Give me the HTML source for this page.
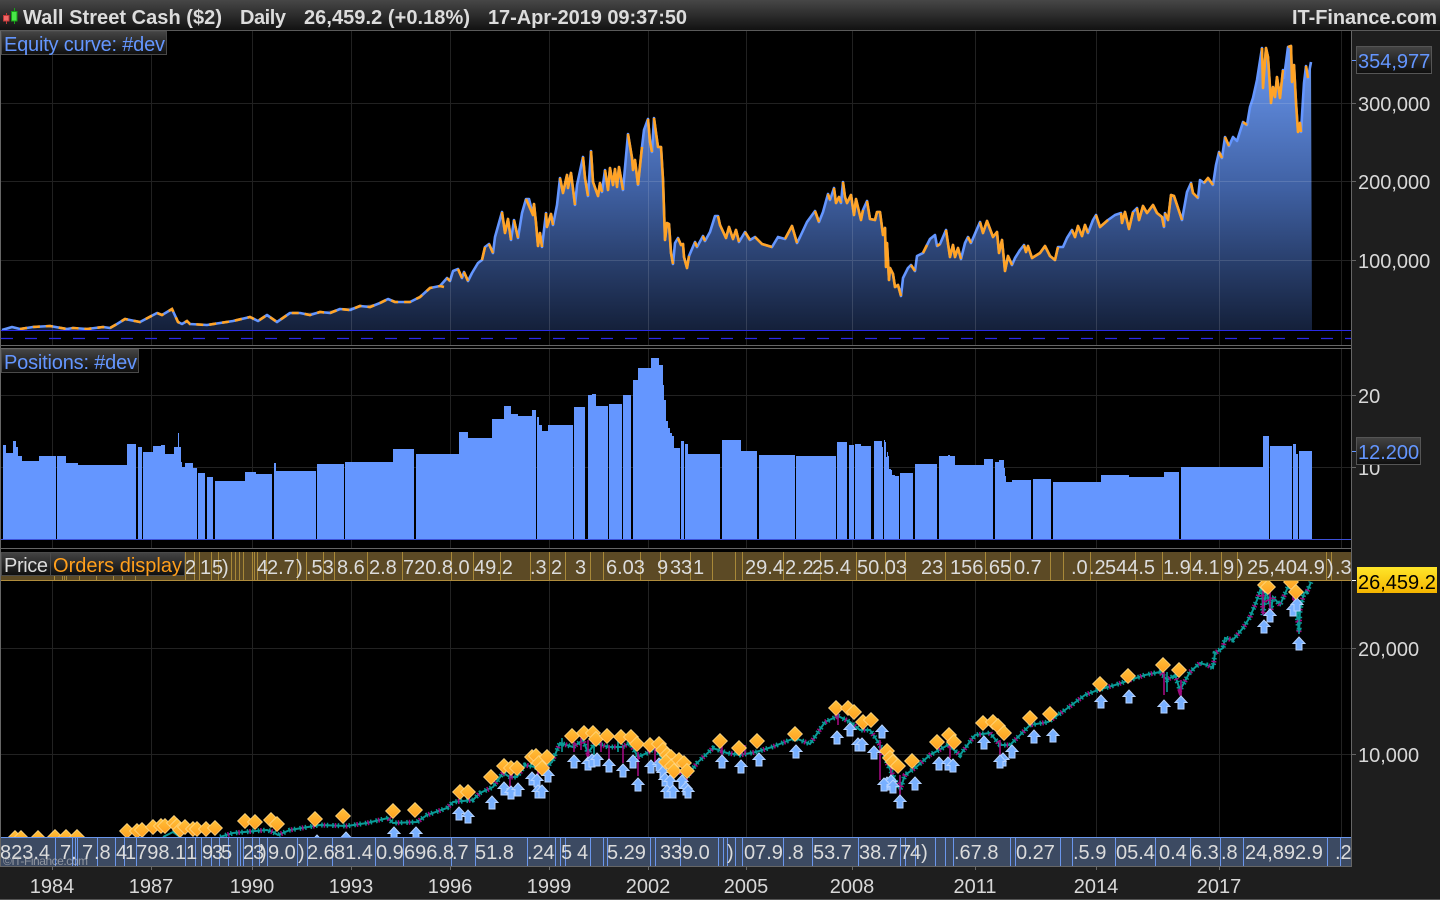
<!DOCTYPE html>
<html><head><meta charset="utf-8"><title>Wall Street Cash</title>
<style>html,body{margin:0;padding:0;background:#000;width:1440px;height:900px;overflow:hidden}svg{display:block}
text{font-family:"Liberation Sans",sans-serif;font-size:20px;fill:#dcdcdc}
.b{font-weight:bold}.bl{fill:#6496ff}.ax{fill:#d8d8d8}.m{text-anchor:middle}</style></head><body>
<svg width="1440" height="900" viewBox="0 0 1440 900" xmlns="http://www.w3.org/2000/svg">
<defs>
<linearGradient id="top" x1="0" y1="0" x2="0" y2="1"><stop offset="0" stop-color="#474747"/><stop offset="1" stop-color="#121212"/></linearGradient>
<linearGradient id="lab" x1="0" y1="0" x2="0" y2="1"><stop offset="0" stop-color="#444"/><stop offset="1" stop-color="#0e0e0e"/></linearGradient>
<linearGradient id="yel" x1="0" y1="0" x2="0" y2="1"><stop offset="0" stop-color="#ffe62a"/><stop offset="1" stop-color="#f4b400"/></linearGradient>
<linearGradient id="area" gradientUnits="userSpaceOnUse" x1="0" y1="50" x2="0" y2="330"><stop offset="0" stop-color="#6a98f0"/><stop offset=".5" stop-color="#3f60a2"/><stop offset="1" stop-color="#14203a"/></linearGradient>
<linearGradient id="dg" x1="0" y1="0" x2="0" y2="1"><stop offset="0" stop-color="#ffc03a"/><stop offset="1" stop-color="#ffa020"/></linearGradient>
<polygon id="d" points="0,-7.5 7.5,0 0,7.5 -7.5,0" fill="url(#dg)" stroke="#ffdc90" stroke-width=".7"/>
<path id="a" d="M0 0L6 6.5H3V13H-3V6.5H-6Z" fill="#78b0ff" stroke="#b4d2ff" stroke-width="1"/>
<clipPath id="p3"><rect x="1" y="581" width="1350" height="256"/></clipPath>
<path id="eq" d="M2 330L12 327 20 329 33 327 50 326 67 329 73 328 87 329 103 327 110 328 117 324 125 319 140 322 157 313 162 315 172 309 178 322 182 324 187 321 190 324 207 325 220 323 233 321 250 317 258 321 267 315 277 322 290 313 300 313 310 315 320 312 330 313 340 309 350 310 360 306 370 307 380 303 388 299 395 302 410 302 420 297 430 288 440 286 447 278 450 281 453 271 458 269 462 278 464 272 468 281 472 273 478 263 482 260 485 247 489 244 493 253 495 237 502 212 505 233 508 219 511 240 514 220 518 238 522 213 526 199 529 199 533 215 534 204 536 223 538 246 540 233 542 247 546 213 547 227 551 214 553 225 557 205 560 178 563 193 567 175 568 188 571 173 573 189 575 205 577 185 583 157 585 178 588 196 591 151 593 182 598 196 600 183 602 192 605 170 608 190 610 168 613 185 615 169 617 187 619 167 623 190 628 134 632 158 633 170 635 160 638 185 642 147 644 130 648 119 650 142 652 152 654 118 656 133 658 147 661 147 663 180 665 240 667 223 669 224 671 253 673 264 675 243 678 238 681 245 683 244 684 257 687 268 689 256 695 242 697 247 703 236 705 241 710 232 715 216 718 216 720 225 726 238 729 227 733 239 736 230 739 242 745 232 750 240 755 237 762 244 772 247 778 237 785 239 792 226 797 243 800 237 807 222 815 211 819 222 823 212 828 194 830 200 834 188 836 203 839 197 841 203 843 182 845 197 847 203 851 195 854 215 856 199 861 220 863 210 867 201 870 219 875 220 877 212 880 212 883 235 885 228 886 267 887 243 889 280 890 268 893 274 895 287 898 285 901 296 903 278 908 268 911 265 915 271 917 256 923 253 927 245 930 239 935 235 937 246 940 244 946 230 950 257 953 245 955 257 958 248 961 259 965 243 968 237 971 243 980 222 983 233 987 221 993 237 997 232 999 253 1002 240 1005 271 1008 256 1012 265 1015 258 1020 250 1024 245 1026 252 1028 246 1032 258 1040 253 1045 246 1050 256 1055 260 1058 247 1063 247 1067 238 1072 230 1075 237 1078 226 1082 236 1085 225 1088 233 1093 220 1096 215 1100 227 1108 220 1115 215 1121 213 1122 223 1125 212 1129 229 1133 212 1137 208 1139 220 1143 206 1147 213 1153 205 1157 213 1162 217 1164 227 1165 213 1168 220 1171 195 1174 196 1177 205 1182 220 1187 192 1191 183 1193 193 1198 198 1200 180 1204 183 1208 178 1213 185 1216 165 1219 152 1222 158 1225 137 1229 146 1233 137 1237 141 1243 122 1247 125 1250 107 1253 98 1257 80 1262 48 1263 88 1266 48 1268 57 1271 103 1273 87 1275 97 1277 77 1280 98 1283 70 1284 78 1288 47 1291 46 1292 82 1294 65 1296 103 1298 132 1300 123 1301 132 1304 83 1306 66 1308 78 1311 62"/>
<path id="pr" d="M220 837L233 833 267 830 273 832 278 835 290 830 320 825 347 826 367 823 388 818 393 823 417 822 427 815 447 808 453 802 473 800 480 793 493 787 503 773 510 777 517 777 525 765 535 767 542 770 552 762 560 743 573 747 583 740 588 753 595 743 608 747 622 747 630 743 638 757 647 753 655 748 663 760 673 767 687 777 697 763 713 748 727 753 740 755 756 752 772 747 795 738 810 744 825 722 838 716 850 722 860 730 870 730 880 745 888 765 900 790 905 775 915 768 930 755 948 745 960 755 975 735 990 733 1000 745 1010 745 1030 725 1048 722 1065 710 1085 695 1098 690 1115 685 1130 680 1145 675 1160 672 1167 680 1175 675 1180 690 1190 672 1200 663 1207 665 1213 668 1215 653 1223 648 1225 638 1233 640 1243 628 1250 617 1257 600 1262 585 1263 615 1266 590 1271 610 1273 597 1280 605 1288 587 1293 583 1295 598 1299 632 1300 610 1304 593 1307 592 1311 582"/>
</defs>

<rect width="1440" height="900" fill="#000"/>
<rect x="1352" y="31" width="88" height="869" fill="#1e1e1e"/>
<rect y="866" width="1440" height="34" fill="#1e1e1e"/>

<!-- panel 1 area -->
<path fill="url(#area)" d="M2 330L12 327 20 329 33 327 50 326 67 329 73 328 87 329 103 327 110 328 117 324 125 319 140 322 157 313 162 315 172 309 178 322 182 324 187 321 190 324 207 325 220 323 233 321 250 317 258 321 267 315 277 322 290 313 300 313 320 312 340 309 360 306 380 303 388 299 395 302 410 302 420 297 430 288 440 286 447 278 450 281 453 271 458 269 462 278 464 272 468 281 472 273 478 263 482 260 485 247 489 244 493 253 495 237 502 212 505 233 508 219 511 240 514 220 518 238 522 213 526 199 529 199 533 215 534 204 536 223 538 246 540 233 542 247 546 213 547 227 551 214 553 225 557 205 560 178 563 193 567 175 568 188 571 173 573 189 575 205 577 185 583 157 585 178 588 196 591 151 593 182 598 196 600 183 602 192 605 170 608 190 610 168 613 185 615 169 617 187 619 167 623 190 628 134 632 158 633 170 635 160 638 185 642 147 644 130 648 119 650 142 652 152 654 118 656 133 658 147 661 147 663 180 665 240 667 223 669 224 671 253 673 264 675 243 678 238 681 245 683 244 684 257 687 268 689 256 695 242 697 247 703 236 705 241 710 232 715 216 718 216 720 225 726 238 729 227 733 239 736 230 739 242 745 232 750 240 755 237 762 244 772 247 778 237 785 239 792 226 797 243 800 237 807 222 815 211 819 222 823 212 828 194 830 200 834 188 836 203 839 197 841 203 843 182 845 197 847 203 851 195 854 215 856 199 861 220 863 210 867 201 870 219 875 220 877 212 880 212 883 235 885 228 886 267 887 243 889 280 890 268 893 274 895 287 898 285 901 296 903 278 908 268 911 265 915 271 917 256 923 253 927 245 930 239 935 235 937 246 940 244 946 230 950 257 953 245 955 257 958 248 961 259 965 243 968 237 971 243 980 222 983 233 987 221 993 237 997 232 999 253 1002 240 1005 271 1008 256 1012 265 1015 258 1020 250 1024 245 1026 252 1028 246 1032 258 1040 253 1045 246 1050 256 1055 260 1058 247 1063 247 1067 238 1072 230 1075 237 1078 226 1082 236 1085 225 1088 233 1093 220 1096 215 1100 227 1108 220 1115 215 1121 213 1122 223 1125 212 1129 229 1133 212 1137 208 1139 220 1143 206 1147 213 1153 205 1157 213 1162 217 1164 227 1165 213 1168 220 1171 195 1174 196 1177 205 1182 220 1187 192 1191 183 1193 193 1198 198 1200 180 1204 183 1208 178 1213 185 1216 165 1219 152 1222 158 1225 137 1229 146 1233 137 1237 141 1243 122 1247 125 1250 107 1253 98 1257 80 1262 48 1263 88 1266 48 1268 57 1271 103 1273 87 1275 97 1277 77 1280 98 1283 70 1284 78 1288 47 1291 46 1292 82 1294 65 1296 103 1298 132 1300 123 1301 132 1304 83 1306 66 1308 78 1311 62 1312 330Z"/>
<use href="#eq" fill="none" stroke="#6496ff" stroke-width="2.6" stroke-linejoin="round"/>
<!-- orange falling segments -->
<path fill="none" stroke="#ffa326" stroke-width="2.6" stroke-dasharray="7 6" d="M20 329L33 327 50 326 67 329 73 328 87 329 103 327 110 328 117 324 125 319 140 322 157 313 162 315 172 309 178 322 182 324 187 321 190 324 207 325 220 323 233 321 250 317 258 321 267 315 277 322 290 313 300 313 310 315 320 312 330 313 340 309 350 310 360 306 370 307 380 303 388 299 395 302 410 302 420 297 430 288 440 286"/>
<path fill="none" stroke="#ffa326" stroke-width="2.6" stroke-linejoin="round" d="M440 286L444 287M447 278L450 281M458 269L462 278M464 272L468 281M485 247L482 260M489 244L493 253M502 212L505 233 508 219 511 240M514 220L518 238M526 199L533 215 534 204 536 223 538 246 540 233 542 247M546 213L547 227 551 214 553 225M560 178L563 193 567 175 568 188 571 173 573 189 575 205M583 157L585 178 588 196M591 151L593 182 598 196 600 183 602 192M605 170L608 190 610 168 613 185 615 169 617 187 619 167 623 190M628 134L632 158 633 170 635 160 638 185M642 147L638 185M648 119L650 142 652 152M654 118L656 133 658 147 661 147 663 180 665 240 667 223 669 224 671 253 673 264M678 238L681 245 683 244 684 257 687 268 689 256M695 242L697 247M703 236L705 241M718 216L720 225 726 238 729 227 733 239 736 230 739 242M745 232L750 240M755 237L762 244 772 247M785 239L792 226 797 243M815 211L819 222M828 194L830 200M834 188L836 203 839 197 841 203M843 182L845 197 847 203 851 195 854 215 856 199 861 220 863 210M867 201L870 219 875 220 877 212 880 212 883 235 885 228 886 267 887 243 889 280 890 268 893 274 895 287 898 285 901 296M911 265L915 271M923 253L927 245M937 246L940 244M946 230L950 257 953 245 955 257 958 248 961 259M968 237L971 243M980 222L983 233 987 221 993 237 997 232 999 253 1002 240 1005 271 1008 256 1012 265M1024 245L1026 252 1028 246 1032 258 1040 253 1045 246 1050 256 1055 260 1058 247M1072 230L1075 237 1078 226 1082 236 1085 225 1088 233M1096 215L1100 227 1108 220M1121 213L1122 223 1125 212 1129 229 1133 212M1137 208L1139 220 1143 206 1147 213 1153 205 1157 213 1162 217 1164 227M1165 213L1168 220 1171 195 1174 196 1177 205 1182 220M1191 183L1193 193 1198 198M1204 183L1208 178 1213 185M1219 152L1222 158M1229 146L1225 137M1243 122L1247 125M1262 48L1263 88 1266 48 1268 57 1271 103 1273 87 1275 97 1277 77 1280 98 1283 70M1288 47L1291 46 1292 82 1294 65 1296 103 1298 132 1300 123 1301 132M1306 66L1308 78"/>
<!-- panel 1 grid -->
<path stroke="#fff" stroke-opacity=".13" fill="none" d="M52.5 31V345M151.5 31V345M252.5 31V345M351.5 31V345M450.5 31V345M549.5 31V345M648.5 31V345M746.5 31V345M852.5 31V345M975.5 31V345M1096.5 31V345M1219.5 31V345M1341.5 31V345M1 103.5H1351M1 181.5H1351M1 260.5H1351"/>
<path stroke="#2a2ae6" d="M1 330.5H1351"/>
<path stroke="#2a2ae6" stroke-width="1.2" stroke-dasharray="12 12" d="M1 338.5H1351"/>

<!-- panel 2 -->
<path stroke="#222" fill="none" d="M52.5 349V548M151.5 349V548M252.5 349V548M351.5 349V548M450.5 349V548M549.5 349V548M648.5 349V548M746.5 349V548M852.5 349V548M975.5 349V548M1096.5 349V548M1219.5 349V548M1341.5 349V548M1 395.5H1351M1 467.5H1351"/>
<path fill="#6496ff" d="M3 539V445H6V453H13V441H16V447H18V456H22V461H39V456H56V539ZM57 539V456H66V463H78V465H127V444H136V539ZM138 539V447H142V539ZM143 539V452H153V446H161V445H165V454H174V447H178V433H179V447H181V462H182V467H185V463H193V468H197V539ZM198 539V473H205V539ZM207 539V477H213V539ZM215 539V481H245V472H256V474H272V539ZM274 539V463H276V471H316V539ZM317 539V464H344V539ZM345 539V462H393V449H414V539ZM416 539V454H459V432H468V438H492V419H504V406H511V414H518V416H532V410H536V539ZM537 539V417H539V425H542V431H548V425H573V539ZM574 539V407H585V539ZM588 539V395H592V394H596V406H608V539ZM609 539V404H622V539ZM623 539V395H631V539ZM633 539V380H638V368H651V358H659V365H663V385H664V400H666V421H668V428H670V433H672V436H674V448H680V539ZM681 539V441H684V539ZM685 539V444H688V454H720V539ZM722 539V440H741V451H757V539ZM759 539V455H795V539ZM796 539V456H836V539ZM837 539V442H847V539ZM849 539V445H854V539ZM855 539V444H861V446H871V539ZM874 539V441H882V447H883V539ZM884 539V440H885V442H886V457H887V452H888V456H889V469H891V470H892V475H895V476H899V539ZM900 539V473H913V539ZM915 539V464H937V539ZM939 539V456H948V455H950V456H955V465H984V459H993V539ZM995 539V462H999V460H1004V468H1005V476H1006V482H1012V480H1031V539ZM1033 539V479H1051V539ZM1053 539V482H1101V475H1129V477H1164V472H1179V539ZM1181 539V467H1263V436H1269V539ZM1270 539V446H1292V539ZM1293 539V444H1296V454H1298V539ZM1299 539V451H1312V539Z"/>
<path stroke="#3c50d8" d="M1 539.5H1351"/>

<!-- panel 3 -->
<path stroke="#222" fill="none" d="M52.5 581V837M151.5 581V837M252.5 581V837M351.5 581V837M450.5 581V837M549.5 581V837M648.5 581V837M746.5 581V837M852.5 581V837M975.5 581V837M1096.5 581V837M1219.5 581V837M1341.5 581V837M1 648.5H1351M1 754.5H1351"/>
<g clip-path="url(#p3)">
<path fill="none" stroke="#0a9a96" stroke-width="2" d="M163 837L173 832 180 837"/>
<use href="#pr" fill="none" stroke="#0a9a96" stroke-width="2"/>
<use href="#pr" fill="none" stroke="#0a9a96" stroke-width="5" stroke-dasharray="1.5 4"/>
<use href="#pr" fill="none" stroke="#a00a80" stroke-width="5" stroke-dasharray="1.5 9.5" stroke-dashoffset="3"/>
<path fill="none" stroke="#a00a80" stroke-width="1.6" d="M510 775V787M538 765V782M574 742V752M581 738V750M588 740V758M601 742V752M609 745V759M623 745V763M638 752V776M655 745V762M663 755V772M676 760V772M687 770V782M722 745V755M745 745V755M838 710V725M880 740V780M891 760V790M900 775V795M950 740V758M1000 740V755M1164 672V695M1181 680V696M1263 590V615M1270 590V612M1293 585V600"/>
<path fill="none" stroke="#0a9a96" stroke-width="1.6" d="M1299 600V634M594 742V756M1167 672V692M562 738V752M618 740V752"/>
<g>
<use href="#a" x="317" y="835"/><use href="#a" x="346" y="832"/><use href="#a" x="394" y="827"/><use href="#a" x="416" y="827"/><use href="#a" x="459" y="807"/><use href="#a" x="468" y="810"/><use href="#a" x="492" y="796"/><use href="#a" x="504" y="782"/><use href="#a" x="511" y="786"/><use href="#a" x="518" y="783"/><use href="#a" x="532" y="772"/><use href="#a" x="537" y="774"/><use href="#a" x="548" y="769"/><use href="#a" x="538" y="785"/><use href="#a" x="542" y="785"/><use href="#a" x="574" y="755"/><use href="#a" x="588" y="757"/><use href="#a" x="592" y="754"/><use href="#a" x="597" y="753"/><use href="#a" x="609" y="759"/><use href="#a" x="623" y="764"/><use href="#a" x="633" y="755"/><use href="#a" x="638" y="778"/><use href="#a" x="651" y="760"/><use href="#a" x="659" y="758"/><use href="#a" x="663" y="766"/><use href="#a" x="665" y="773"/><use href="#a" x="670" y="775"/><use href="#a" x="667" y="785"/><use href="#a" x="673" y="785"/><use href="#a" x="682" y="775"/><use href="#a" x="686" y="782"/><use href="#a" x="688" y="785"/><use href="#a" x="722" y="755"/><use href="#a" x="741" y="760"/><use href="#a" x="759" y="753"/><use href="#a" x="796" y="745"/><use href="#a" x="837" y="731"/><use href="#a" x="850" y="723"/><use href="#a" x="858" y="738"/><use href="#a" x="862" y="738"/><use href="#a" x="874" y="746"/><use href="#a" x="882" y="725"/><use href="#a" x="887" y="777"/><use href="#a" x="891" y="775"/><use href="#a" x="884" y="778"/><use href="#a" x="893" y="780"/><use href="#a" x="900" y="795"/><use href="#a" x="915" y="777"/><use href="#a" x="939" y="757"/><use href="#a" x="948" y="757"/><use href="#a" x="953" y="759"/><use href="#a" x="984" y="736"/><use href="#a" x="1003" y="753"/><use href="#a" x="1000" y="755"/><use href="#a" x="1012" y="745"/><use href="#a" x="1034" y="730"/><use href="#a" x="1053" y="729"/><use href="#a" x="1101" y="695"/><use href="#a" x="1129" y="690"/><use href="#a" x="1164" y="700"/><use href="#a" x="1181" y="696"/><use href="#a" x="1264" y="620"/><use href="#a" x="1270" y="609"/><use href="#a" x="1293" y="603"/><use href="#a" x="1297" y="598"/><use href="#a" x="1299" y="637"/>
</g>
<g>
<use href="#d" x="15" y="838"/><use href="#d" x="21" y="838"/><use href="#d" x="38" y="838"/><use href="#d" x="55" y="837"/><use href="#d" x="66" y="837"/><use href="#d" x="77" y="837"/><use href="#d" x="127" y="831"/><use href="#d" x="137" y="831"/><use href="#d" x="142" y="830"/><use href="#d" x="153" y="827"/><use href="#d" x="161" y="826"/><use href="#d" x="165" y="826"/><use href="#d" x="174" y="823"/><use href="#d" x="177" y="826"/><use href="#d" x="180" y="830"/><use href="#d" x="185" y="827"/><use href="#d" x="193" y="829"/><use href="#d" x="197" y="829"/><use href="#d" x="206" y="829"/><use href="#d" x="215" y="828"/><use href="#d" x="245" y="821"/><use href="#d" x="255" y="822"/><use href="#d" x="271" y="820"/><use href="#d" x="277" y="824"/><use href="#d" x="315" y="819"/><use href="#d" x="343" y="816"/><use href="#d" x="393" y="811"/><use href="#d" x="415" y="810"/><use href="#d" x="460" y="792"/><use href="#d" x="468" y="792"/><use href="#d" x="491" y="777"/><use href="#d" x="504" y="766"/><use href="#d" x="511" y="768"/><use href="#d" x="517" y="768"/><use href="#d" x="532" y="757"/><use href="#d" x="536" y="756"/><use href="#d" x="539" y="763"/><use href="#d" x="542" y="768"/><use href="#d" x="547" y="757"/><use href="#d" x="572" y="736"/><use href="#d" x="584" y="733"/><use href="#d" x="593" y="733"/><use href="#d" x="596" y="739"/><use href="#d" x="607" y="736"/><use href="#d" x="621" y="737"/><use href="#d" x="631" y="737"/><use href="#d" x="637" y="744"/><use href="#d" x="650" y="745"/><use href="#d" x="659" y="744"/><use href="#d" x="663" y="750"/><use href="#d" x="667" y="755"/><use href="#d" x="671" y="757"/><use href="#d" x="666" y="762"/><use href="#d" x="672" y="766"/><use href="#d" x="674" y="771"/><use href="#d" x="679" y="760"/><use href="#d" x="684" y="763"/><use href="#d" x="687" y="771"/><use href="#d" x="720" y="741"/><use href="#d" x="739" y="748"/><use href="#d" x="757" y="741"/><use href="#d" x="795" y="734"/><use href="#d" x="836" y="708"/><use href="#d" x="848" y="708"/><use href="#d" x="854" y="712"/><use href="#d" x="863" y="722"/><use href="#d" x="871" y="720"/><use href="#d" x="887" y="751"/><use href="#d" x="890" y="758"/><use href="#d" x="893" y="762"/><use href="#d" x="898" y="766"/><use href="#d" x="912" y="761"/><use href="#d" x="937" y="742"/><use href="#d" x="949" y="735"/><use href="#d" x="954" y="742"/><use href="#d" x="983" y="723"/><use href="#d" x="993" y="722"/><use href="#d" x="998" y="726"/><use href="#d" x="1004" y="733"/><use href="#d" x="1030" y="718"/><use href="#d" x="1050" y="714"/><use href="#d" x="1100" y="684"/><use href="#d" x="1128" y="676"/><use href="#d" x="1163" y="665"/><use href="#d" x="1179" y="670"/><use href="#d" x="1265" y="585"/><use href="#d" x="1268" y="587"/><use href="#d" x="1291" y="582"/><use href="#d" x="1296" y="592"/>
</g>
</g>

<!-- gold strip -->
<rect x="1" y="552" width="1350" height="28" fill="#5c4a25"/>
<path stroke="#b08c3c" d="M1 580.5H1351"/>
<path stroke="#a88838" fill="none" d="M54.5 575V580M62.5 575V580M64.5 575V580M66.5 575V580M79.5 575V580M96.5 575V580M113.5 575V580M122.5 575V580M135.5 575V580M185.5 552V580M194.5 552V580M199.5 552V580M211.5 552V580M218.5 552V580M231.5 552V580M235.5 552V580M239.5 552V580M243.5 552V580M252.5 552V580M254.5 552V580M257.5 552V580M266.5 552V580M297.5 552V580M306.5 552V580M323.5 552V580M334.5 552V580M367.5 552V580M402.5 552V580M451.5 552V580M473.5 552V580M500.5 552V580M530.5 552V580M549.5 552V580M565.5 552V580M590.5 552V580M603.5 552V580M640.5 552V580M660.5 552V580M690.5 552V580M712.5 552V580M735.5 552V580M742.5 552V580M783.5 552V580M820.5 552V580M856.5 552V580M885.5 552V580M905.5 552V580M945.5 552V580M985.5 552V580M1010.5 552V580M1050.5 552V580M1063.5 552V580M1090.5 552V580M1135.5 552V580M1162.5 552V580M1190.5 552V580M1221.5 552V580M1237.5 552V580M1326.5 552V580M1331.5 552V580"/>
<g>
<text x="185" y="574">2</text><text x="200" y="574">1</text><text x="212" y="574">5</text><text x="222" y="574">)</text><text x="257" y="574">4</text><text x="267" y="574">2.7</text><text x="296" y="574">)</text><text x="306" y="574">.53</text><text x="337" y="574">8.6</text><text x="369" y="574">2.8</text><text x="403" y="574">720.8</text><text x="453" y="574">.0</text><text x="474" y="574">49.2</text><text x="530" y="574">.3</text><text x="551" y="574">2</text><text x="575" y="574">3</text><text x="606" y="574">6.03</text><text x="657" y="574">9</text><text x="670" y="574">3</text><text x="681" y="574">3</text><text x="693" y="574">1</text><text x="745" y="574">29.4</text><text x="785" y="574">2</text><text x="797" y="574">.2</text><text x="812" y="574">25.4</text><text x="857" y="574">50.03</text><text x="921" y="574">23</text><text x="950" y="574">156.65</text><text x="1014" y="574">0.7</text><text x="1071" y="574">.0</text><text x="1089" y="574">.2</text><text x="1105" y="574">544.5</text><text x="1163" y="574">1.9</text><text x="1192" y="574">4.1</text><text x="1223" y="574">9</text><text x="1237" y="574">)</text><text x="1247" y="574">25,404.9</text><text x="1327" y="574">)</text><text x="1335" y="574">.3</text>
</g>
<rect x="1.5" y="552.5" width="49" height="23" fill="url(#lab)" stroke="#4a4a4a"/>
<rect x="50.5" y="552.5" width="134" height="23" fill="url(#lab)" stroke="#4a4a4a"/>
<text x="4" y="572" textLength="44">Price</text>
<text x="53" y="572" textLength="129" style="fill:#ff9f1c">Orders display</text>

<!-- bottom strip -->
<rect x="1" y="837" width="1350" height="29" fill="#3c4a62"/>
<path stroke="#6a96ec" d="M1 837.5H1351"/>
<path stroke="#6a96ec" fill="none" d="M55.5 838V866M72.5 838V866M75.5 838V866M77.5 838V866M97.5 838V866M115.5 838V866M124.5 838V866M136.5 838V866M185.5 838V866M195.5 838V866M201.5 838V866M211.5 838V866M219.5 838V866M228.5 838V866M237.5 838V866M240.5 838V866M243.5 838V866M252.5 838V866M259.5 838V866M267.5 838V866M297.5 838V866M307.5 838V866M332.5 838V866M375.5 838V866M403.5 838V866M451.5 838V866M475.5 838V866M527.5 838V866M555.5 838V866M560.5 838V866M565.5 838V866M590.5 838V866M603.5 838V866M607.5 838V866M650.5 838V866M655.5 838V866M680.5 838V866M718.5 838V866M723.5 838V866M727.5 838V866M735.5 838V866M742.5 838V866M783.5 838V866M812.5 838V866M858.5 838V866M900.5 838V866M905.5 838V866M915.5 838V866M935.5 838V866M945.5 838V866M953.5 838V866M1010.5 838V866M1015.5 838V866M1060.5 838V866M1072.5 838V866M1115.5 838V866M1155.5 838V866M1190.5 838V866M1220.5 838V866M1243.5 838V866M1327.5 838V866M1340.5 838V866"/>
<g>
<text x="0" y="859">823.4</text><text x="60" y="859">7.</text><text x="82" y="859">7</text><text x="94" y="859">.8</text><text x="116" y="859">4</text><text x="125" y="859">1798.1</text><text x="186" y="859">1</text><text x="202" y="859">9</text><text x="212" y="859">3</text><text x="221" y="859">5</text><text x="243" y="859">2</text><text x="253" y="859">3</text><text x="260" y="859">)</text><text x="268" y="859">9.0</text><text x="298" y="859">)</text><text x="307" y="859">2.6</text><text x="334" y="859">81.4</text><text x="376" y="859">0.9</text><text x="404" y="859">696.8</text><text x="452" y="859">.7</text><text x="475" y="859">51.8</text><text x="527" y="859">.24</text><text x="561" y="859">5</text><text x="577" y="859">4</text><text x="607" y="859">5.29</text><text x="660" y="859">3</text><text x="671" y="859">3</text><text x="682" y="859">9.0</text><text x="727" y="859">)</text><text x="744" y="859">07.9</text><text x="787" y="859">.8</text><text x="813" y="859">53.7</text><text x="859" y="859">38.7</text><text x="900" y="859">7</text><text x="910" y="859">4)</text><text x="954" y="859">.67.8</text><text x="1016" y="859">0.27</text><text x="1073" y="859">.5.9</text><text x="1116" y="859">05.4</text><text x="1159" y="859">0.4</text><text x="1191" y="859">6.3</text><text x="1221" y="859">.8</text><text x="1245" y="859">24,892.9</text><text x="1335" y="859">.2</text>
</g>
<text x="3" y="865" textLength="85" style="font-size:12px;fill:#c8c8c8;fill-opacity:.6">©IT-Finance.com</text>

<!-- x axis -->
<path stroke="#666" d="M0 866.5H1352"/>
<path stroke="#666" fill="none" d="M52.5 866V870M151.5 866V870M252.5 866V870M351.5 866V870M450.5 866V870M549.5 866V870M648.5 866V870M746.5 866V870M852.5 866V870M975.5 866V870M1096.5 866V870M1219.5 866V870"/>
<g><text class="m ax" x="52" y="893">1984</text><text class="m ax" x="151" y="893">1987</text><text class="m ax" x="252" y="893">1990</text><text class="m ax" x="351" y="893">1993</text><text class="m ax" x="450" y="893">1996</text><text class="m ax" x="549" y="893">1999</text><text class="m ax" x="648" y="893">2002</text><text class="m ax" x="746" y="893">2005</text><text class="m ax" x="852" y="893">2008</text><text class="m ax" x="975" y="893">2011</text><text class="m ax" x="1096" y="893">2014</text><text class="m ax" x="1219" y="893">2017</text></g>

<!-- frames -->
<path stroke="#666" fill="none" d="M.5 31V866M1351.5 31V866M0 345.5H1352M0 348.5H1352M0 548.5H1352"/>
<path stroke="#555" d="M0 899.5H1440"/>

<!-- top bar -->
<rect width="1440" height="30" fill="url(#top)"/>
<path stroke="#5a5a5a" d="M0 30.5H1440"/>
<path stroke="#c03838" d="M6.5 13V24"/><rect x="3.5" y="15.5" width="5.5" height="5.5" fill="#f06868" stroke="#c03838"/>
<path stroke="#18a018" d="M14.5 8V24"/><rect x="11.5" y="11.5" width="5.5" height="9.5" fill="#48e848" stroke="#18a018"/>
<text class="b" x="23" y="24" textLength="199">Wall Street Cash ($2)</text>
<text class="b" x="240" y="24" textLength="46">Daily</text>
<text class="b" x="304" y="24" textLength="166">26,459.2 (+0.18%)</text>
<text class="b" x="488" y="24" textLength="199">17-Apr-2019 09:37:50</text>
<text class="b" x="1292" y="24" textLength="145">IT-Finance.com</text>

<!-- panel labels -->
<rect x="1.5" y="31.5" width="165" height="23" fill="url(#lab)" stroke="#4a4a4a"/>
<text class="bl" x="4" y="51" textLength="161">Equity curve: #dev</text>
<rect x="1.5" y="349.5" width="137" height="23" fill="url(#lab)" stroke="#4a4a4a"/>
<text class="bl" x="4" y="369" textLength="133">Positions: #dev</text>

<!-- right axis -->
<path stroke="#666" fill="none" d="M1352 103.5H1356M1352 181.5H1356M1352 260.5H1356M1352 395.5H1356M1352 467.5H1356M1352 648.5H1356M1352 754.5H1356"/>
<text class="ax" x="1358" y="111">300,000</text>
<text class="ax" x="1358" y="189">200,000</text>
<text class="ax" x="1358" y="268">100,000</text>
<text class="ax" x="1358" y="403">20</text>
<text class="ax" x="1358" y="475">10</text>
<text class="ax" x="1358" y="656">20,000</text>
<text class="ax" x="1358" y="762">10,000</text>
<path stroke="#6496ff" d="M1352 60.5H1356M1352 451.5H1356"/>
<path stroke="#fff" d="M1352 580.5H1356"/>
<rect x="1356.5" y="46.5" width="75" height="27" fill="url(#lab)" stroke="#555"/>
<text class="bl" x="1358" y="68">354,977</text>
<rect x="1356.5" y="437.5" width="64" height="27" fill="url(#lab)" stroke="#555"/>
<text class="bl" x="1358" y="459">12.200</text>
<rect x="1357" y="567" width="80" height="26" fill="url(#yel)"/>
<text x="1358" y="589" style="fill:#000">26,459.2</text>
</svg>
</body></html>
